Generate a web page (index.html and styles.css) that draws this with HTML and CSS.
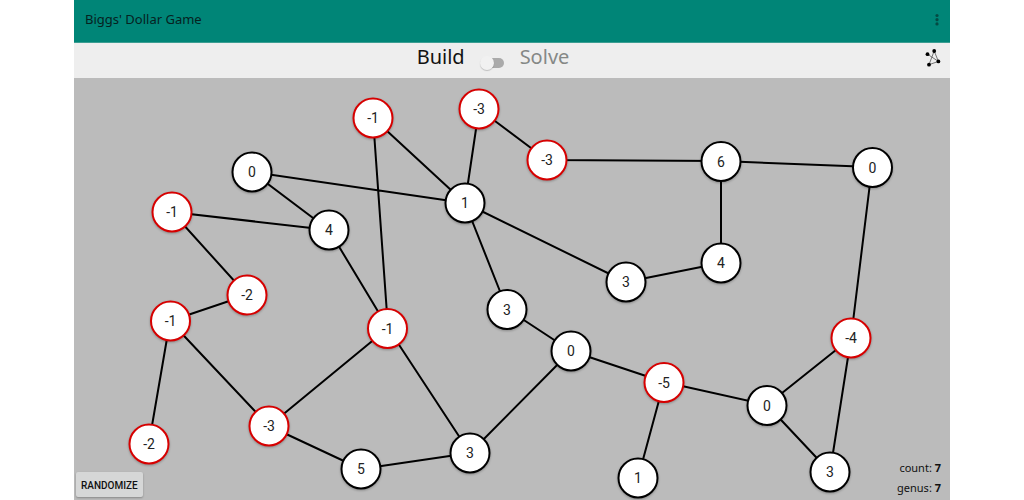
FILE: index.html
```html
<!DOCTYPE html>
<html lang="en">
<head>
<meta charset="utf-8">
<meta name="viewport" content="width=device-width, initial-scale=1">
<title>Biggs' Dollar Game</title>
<link rel="stylesheet" href="styles.css">
</head>
<body>
<div class="app">
  <header class="app-bar">
    <h1 class="title">Biggs' Dollar Game</h1>
    <button class="icon-button menu" type="button" aria-label="More options">
      <svg width="4" height="14" viewBox="0 0 4 14"><circle cx="2" cy="3.500" r="1.600"/><circle cx="2" cy="7.700" r="1.600"/><circle cx="2" cy="11.900" r="1.600"/></svg>
    </button>
  </header>
  <div class="mode-bar">
    <label class="mode">
      <span class="mode-name">Build</span>
      <input class="switch" type="checkbox" role="switch" aria-label="Build or solve">
      <span class="mode-name off">Solve</span>
    </label>
    <button class="icon-button graph-button" type="button" aria-label="Graph layout">
      <svg width="16" height="20" viewBox="0 0 16 20">
        <path d="M2.500 5.200 13.400 12.400 9.200 2 4 15.700 13.400 12.400" fill="none" stroke="#666" stroke-width="0.900"/>
        <circle cx="2.500" cy="5.200" r="1.900"/><circle cx="9.200" cy="2" r="1.900"/><circle cx="13.400" cy="12.400" r="1.900"/><circle cx="4" cy="15.700" r="1.900"/>
      </svg>
    </button>
  </div>
  <main class="board">
    <svg class="graph" viewBox="0 0 876 422" role="img" aria-label="Dollar game graph">
      <path class="edges" d="M299 40 391 125M299 40 314 250M405 31 391 125M405 31 473 82M473 82 647 83M647 83 798 89M647 83 647 185M647 185 552 204M552 204 391 125M178 94 391 125M178 94 255 152M98 134 255 152M98 134 173 217M173 217 96 243M96 243 75 365M96 243 195 348M195 348 314 250M195 348 287 391M287 391 396 375M396 375 314 250M255 152 314 250M391 125 433 231M433 231 497 273M497 273 396 375M497 273 590 304M590 304 564 400M590 304 693 327M693 327 777 260M693 327 756 394M756 394 777 260M777 260 798 89"/>
      <g class="node debt" transform="translate(299 40)"><circle r="19.500"/><text y="5">-1</text></g>
      <g class="node debt" transform="translate(405 31)"><circle r="19.500"/><text y="5">-3</text></g>
      <g class="node debt" transform="translate(473 82)"><circle r="19.500"/><text y="5">-3</text></g>
      <g class="node" transform="translate(647 83.500)"><circle r="19.500"/><text y="5">6</text></g>
      <g class="node" transform="translate(798.500 89.500)"><circle r="19.500"/><text y="5">0</text></g>
      <g class="node" transform="translate(178 94)"><circle r="19.500"/><text y="5">0</text></g>
      <g class="node" transform="translate(391 125)"><circle r="19.500"/><text y="5">1</text></g>
      <g class="node debt" transform="translate(98 134)"><circle r="19.500"/><text y="5">-1</text></g>
      <g class="node" transform="translate(255 152)"><circle r="19.500"/><text y="5">4</text></g>
      <g class="node" transform="translate(647 185)"><circle r="19.500"/><text y="5">4</text></g>
      <g class="node" transform="translate(552 204)"><circle r="19.500"/><text y="5">3</text></g>
      <g class="node debt" transform="translate(173 217)"><circle r="19.500"/><text y="5">-2</text></g>
      <g class="node debt" transform="translate(96.500 243)"><circle r="19.500"/><text y="5">-1</text></g>
      <g class="node debt" transform="translate(313.500 250.500)"><circle r="19.500"/><text y="5">-1</text></g>
      <g class="node" transform="translate(433 231.500)"><circle r="19.500"/><text y="5">3</text></g>
      <g class="node" transform="translate(497 273)"><circle r="19.500"/><text y="5">0</text></g>
      <g class="node debt" transform="translate(777 260)"><circle r="19.500"/><text y="5">-4</text></g>
      <g class="node debt" transform="translate(590 304.500)"><circle r="19.500"/><text y="5">-5</text></g>
      <g class="node" transform="translate(693 327.500)"><circle r="19.500"/><text y="5">0</text></g>
      <g class="node debt" transform="translate(195 348)"><circle r="19.500"/><text y="5">-3</text></g>
      <g class="node debt" transform="translate(75 366)"><circle r="19.500"/><text y="5">-2</text></g>
      <g class="node" transform="translate(287 391)"><circle r="19.500"/><text y="5">5</text></g>
      <g class="node" transform="translate(396 375)"><circle r="19.500"/><text y="5">3</text></g>
      <g class="node" transform="translate(564 400)"><circle r="19.500"/><text y="5">1</text></g>
      <g class="node" transform="translate(756 394)"><circle r="19.500"/><text y="5">3</text></g>
    </svg>
    <button class="randomize" type="button">RANDOMIZE</button>
    <div class="stats">
      <div>count: <b>7</b></div>
      <div>genus: <b>7</b></div>
    </div>
  </main>
</div>
</body>
</html>
```
FILE: styles.css
```css
* { box-sizing: border-box; }
body {
  margin: 0;
  background: #fff;
  color: #111;
  font-family: "Noto Sans", "Open Sans", sans-serif;
}
.app {
  display: flex;
  flex-direction: column;
  min-height: 100vh;
  margin: 0 74px;
}
.app-bar {
  display: flex;
  align-items: center;
  justify-content: space-between;
  height: 43px;
  padding: 0 11px 4px;
  background: #008577;
  border-bottom: 1px solid #3b9d92;
}
.title {
  margin: 0;
  color: #06221f;
  font-size: 13px;
  font-weight: 400;
}
.icon-button {
  display: flex;
  padding: 0;
  border: 0;
  background: none;
  cursor: pointer;
}
.menu { fill: #044a43; }
.mode-bar {
  display: grid;
  grid-template-columns: 1fr auto 1fr;
  align-items: center;
  height: 35px;
  padding: 0 9px;
  background: #eee;
}
.mode {
  display: flex;
  grid-column: 2;
  align-items: center;
  gap: 15px;
  margin-right: 38px;
  line-height: 28px;
}
.mode-name {
  padding-bottom: 8px;
  font-size: 20px;
}
.mode-name.off { color: #858886; }
.switch {
  display: flex;
  align-items: center;
  width: 24px;
  height: 10px;
  margin: 4px 1px 0 0;
  appearance: none;
  background: linear-gradient(#aaa, #aaa) right / 20px 10px no-repeat;
  border-radius: 5px;
}
.switch::before {
  flex: none;
  width: 14px;
  height: 14px;
  content: "";
  background: #f1f1f1;
  border-radius: 50%;
  box-shadow: 0 1px 1px #0003;
}
.switch:checked::before { margin-left: auto; }
.graph-button {
  grid-column: 3;
  justify-self: end;
  padding-bottom: 4px;
}
.board {
  position: relative;
  display: flex;
  flex: 1;
  background: #bbb;
}
.graph {
  width: 100%;
  height: auto;
}
.edges {
  fill: none;
  stroke: #000;
  stroke-width: 2;
}
.node circle {
  fill: #fff;
  stroke: #000;
  stroke-width: 2px;
  filter: drop-shadow(0 1px 1px #0004);
}
.node.debt circle { stroke: #d60000; }
.node text {
  fill: #222;
  font-family: Roboto, sans-serif;
  font-size: 14px;
  text-anchor: middle;
}
.randomize {
  position: absolute;
  bottom: 3px;
  left: 2px;
  padding: 7px 5px 5px;
  border: 0;
  border-radius: 2px;
  background: #d6d7d7;
  box-shadow: 0 1px 2px #0004;
  color: #111;
  font: 500 10px/13px Roboto, sans-serif;
}
.stats {
  position: absolute;
  right: 9px;
  bottom: 2px;
  font-size: 11px;
  line-height: 20px;
  text-align: right;
}
```
